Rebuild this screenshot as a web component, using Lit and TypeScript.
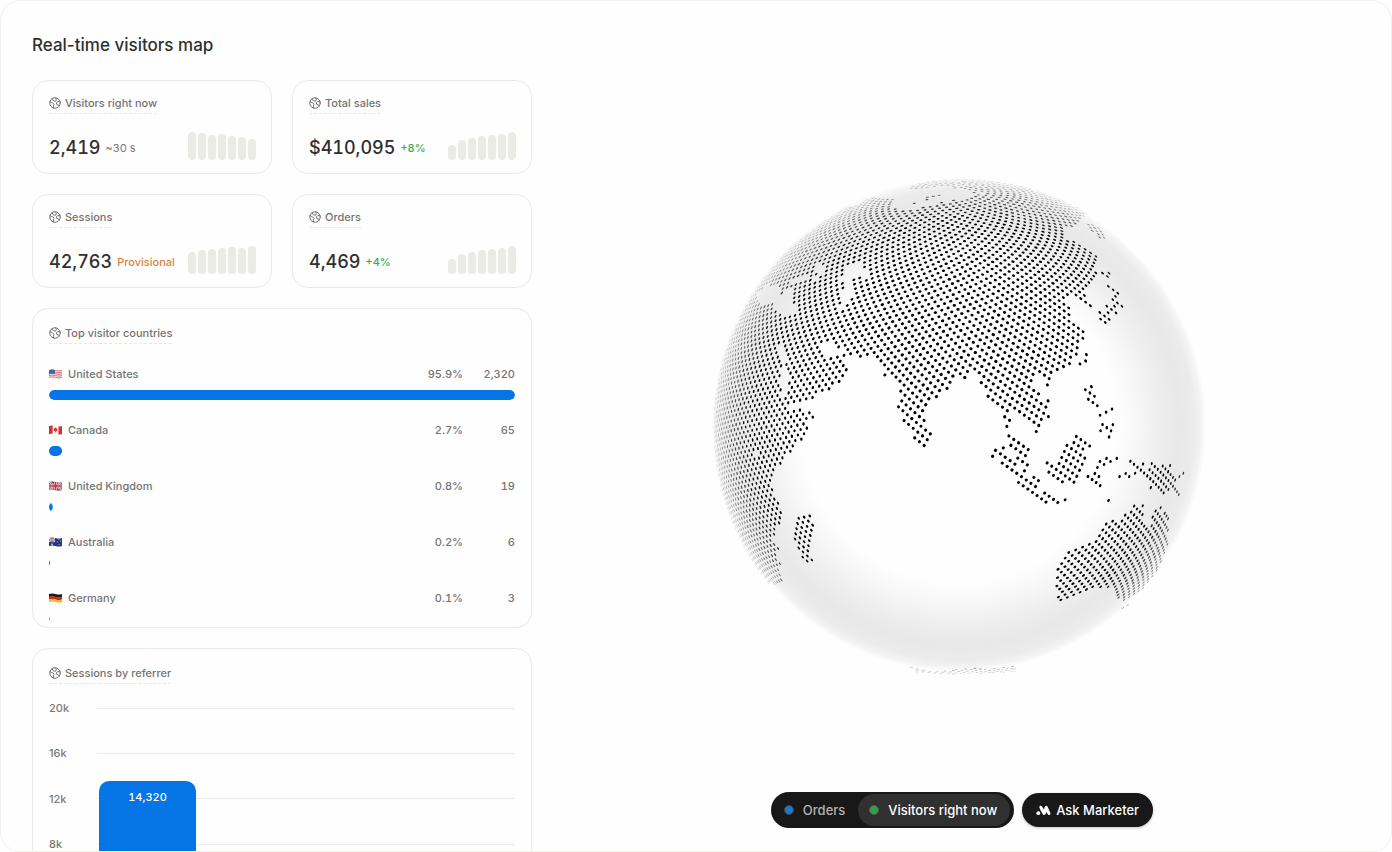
import { LitElement, html, svg, css } from "lit";
import { customElement, property, state } from "lit/decorators.js";

/* ---------- data ---------- */

interface Metric {
  label: string;
  value: string;
  note: string;
  tone: "muted" | "up" | "warn";
  bars: number[];
}

const METRICS: Metric[] = [
  { label: "Visitors right now", value: "2,419", note: "~30 s", tone: "muted", bars: [28, 27, 25, 26, 24, 23, 21] },
  { label: "Total sales", value: "$410,095", note: "+8%", tone: "up", bars: [15, 20, 22, 24, 25, 26, 28] },
  { label: "Sessions", value: "42,763", note: "Provisional", tone: "warn", bars: [22, 24, 25, 26, 27, 26, 28] },
  { label: "Orders", value: "4,469", note: "+4%", tone: "up", bars: [15, 20, 22, 24, 25, 26, 28] },
];

const COUNTRIES = [
  { code: "us", name: "United States", share: "95.9%", count: 2320 },
  { code: "ca", name: "Canada", share: "2.7%", count: 65 },
  { code: "gb", name: "United Kingdom", share: "0.8%", count: 19 },
  { code: "au", name: "Australia", share: "0.2%", count: 6 },
  { code: "de", name: "Germany", share: "0.1%", count: 3 },
];

/* ---------- small pictures ---------- */

const globeIcon = html`<svg class="icon" width="12" height="12" viewBox="0 0 24 24" fill="none" stroke="currentColor"
  stroke-width="2" stroke-linecap="round" stroke-linejoin="round" aria-hidden="true">
  <circle cx="12" cy="12" r="10.5" />
  <path d="M2 9.5 7 11.5 10 14.5 8.5 18 9 22" />
  <path d="M6 3.8 8.5 7.5 13 8.5 14.5 5.5 13.5 2" />
  <path d="M22 9.5 17.5 9 14.5 12 16 15.5 19.5 16 20.5 18" />
</svg>`;

const flagArt: Record<string, unknown> = {
  us: svg`<path fill="#f3e6e6" d="M0 1Q3 0 6.500 1T13 1V9Q10 10 6.500 9T0 9Z"/>
    <path stroke="#d0606a" stroke-width=".8" fill="none" d="M0 1.500Q3 .5 6.500 1.500T13 1.500M0 3.200Q3 2.200 6.500 3.200T13 3.200M0 4.900Q3 3.900 6.500 4.900T13 4.900M0 6.600Q3 5.600 6.500 6.600T13 6.600M0 8.400Q3 7.400 6.500 8.400T13 8.400"/>
    <path fill="#4a5f9e" d="M0 1Q3 0 6 .9V5Q3 4.100 0 5.100Z"/>`,
  ca: svg`<path fill="#f7eeee" d="M0 1Q3 0 6.500 1T13 1V9Q10 10 6.500 9T0 9Z"/>
    <path fill="#d2322d" d="M0 1Q2 .3 3.600 .4V8.500Q1.500 8.500 0 9.200ZM9.500 1.500Q11.500 1.600 13 1V9Q11 9.700 9.500 9.500ZM6.500 2.300 7.300 3.600 8.500 3.500 8 5.200 8.400 5.900 6.800 6.300V7.500H6.200V6.300L4.600 5.700 5 4.900 4.500 3.400 5.700 3.500Z"/>`,
  gb: svg`<path fill="#2b3a78" d="M0 1Q3 0 6.500 1T13 1V9Q10 10 6.500 9T0 9Z"/>
    <path stroke="#f0e8ec" stroke-width="1.800" d="M.3 1 12.700 9M12.700 1 .3 9"/>
    <path stroke="#f0e8ec" stroke-width="3" d="M6.500 1V9.200M0 5H13"/>
    <path stroke="#cf2f3c" stroke-width=".7" d="M.3 1 12.700 9M12.700 1 .3 9"/>
    <path stroke="#cf2f3c" stroke-width="1.700" d="M6.500 .9V9.200M0 5H13"/>`,
  au: svg`<path fill="#1f3a80" d="M0 1Q3 0 6.500 1T13 1V9Q10 10 6.500 9T0 9Z"/>
    <path stroke="#e8e4ec" stroke-width="1.100" d="M0 1.200 6 4.800M6 1.200 0 4.800M3 .8V5.200M0 3H6"/>
    <path stroke="#cf2f3c" stroke-width=".6" d="M3 .8V5.200M0 3H6"/>
    <path fill="#fff" d="M3 6.200 3.900 7.200 3 8.300 2.100 7.200ZM9.500 1.800H10.300V2.700H9.500ZM11.300 3.600H12V4.400H11.300ZM8.200 4.400H9V5.200H8.200ZM9.700 7.200H10.600V8.100H9.700Z"/>`,
  de: svg`<path fill="#1c1a1a" d="M0 1Q3 0 6.500 1T13 1V4Q10 5 6.500 4T0 4Z"/>
    <path fill="#d3281f" d="M0 3.800Q3 2.800 6.500 3.800T13 3.800V6.600Q10 7.600 6.500 6.600T0 6.600Z"/>
    <path fill="#f2b927" d="M0 6.500Q3 5.500 6.500 6.500T13 6.500V9Q10 10 6.500 9T0 9Z"/>`,
};

const flag = (code: string) =>
  html`<svg class="flag" width="13" height="10" viewBox="0 0 13 10" aria-hidden="true">${flagArt[code]}</svg>`;

const marketerIcon = html`<svg width="15" height="12" viewBox="0 0 15 12" fill="#fff" aria-hidden="true">
  <circle cx="2.300" cy="9.200" r="1.900" />
  <path d="M3.300 3.200C3.100 1.900 4.900 1.100 5.800 2.300L8 5.600 8.800 2.800C9.200 1.500 10.900 1.400 11.500 2.600L14.400 8.900C15 10.400 13 11.800 11.900 10.400L10.300 8 9.600 9.900C9.100 11.200 7.500 11.300 6.800 10.200L4.600 6.600Z" />
</svg>`;

/* ---------- globe ---------- */

const VIEW = 628;
const CX = 314.5;
const CY = 316;
const RADIUS = 250.8;
const DOTS = 20000;
const LONGITUDE = (90.568 * Math.PI) / 180;
const TILT = 0.1806;

type Point = [number, number];

/** Outlines are kept in four tiles, at three units to one unit of the view. */
const tile = (ox: number, oy: number) => (list: number[]): Point[] => {
  const out: Point[] = [];
  for (let i = 0; i < list.length; i += 2) out.push([ox + list[i] / 3, oy + list[i + 1] / 3]);
  return out;
};
const nw = tile(52, 58);
const ne = tile(302, 58);
const sw = tile(52, 308);
const se = tile(302, 308);

const LAND: Point[][] = [
  // Eurasia and Africa
  [
    ...nw([-60, 400, 0, 300, 150, 150, 300, 60, 400, 125, 440, 112, 470, 106, 500, 88, 530, 82, 580, 84, 580, 114, 600, 118, 630, 120, 650, 114, 700, 106, 715, 97, 740, 98, 750, 90]),
    ...ne([15, 90, 40, 84, 60, 77, 90, 70, 110, 66, 90, 55, 85, 30, 200, 10, 420, 120, 400, 140, 385, 165, 350, 172, 345, 195, 352, 207, 400, 222, 413, 235, 432, 243, 446, 268, 440, 290, 442, 318, 420, 336, 408, 352, 412, 375, 415, 390, 430, 405, 414, 422, 405, 405, 390, 390, 378, 380, 362, 380, 350, 386, 350, 400, 365, 410, 365, 435, 380, 460, 395, 472, 406, 505, 388, 518, 386, 550, 366, 585, 340, 596, 322, 604, 303, 620, 300, 648, 288, 650, 290, 628, 270, 620, 248, 625, 252, 640, 258, 660, 276, 688, 288, 702, 290, 685, 301, 690, 294, 714, 301, 740, 275, 772, 272, 775, 262, 792, 245, 765, 232, 748, 212, 736, 196, 720, 182, 715, 186, 751, 178, 775, 164, 775, 158, 741, 138, 702, 108, 680, 102, 655, 90, 642, 74, 614, 60, 612, 44, 630, 25, 618, 8, 626]),
    ...nw([750, 642, 742, 662, 712, 686, 684, 706, 674, 724, 678, 752]),
    ...sw([697, 41, 673, 84, 655, 72, 618, 14]),
    ...nw([588, 710, 598, 690, 595, 665, 592, 640, 575, 622, 547, 618, 556, 597, 536, 577, 525, 560, 512, 558, 480, 565, 450, 558, 432, 566, 444, 600, 420, 640, 388, 662, 362, 668, 337, 690, 300, 698, 280, 704, 262, 712, 283, 716, 325, 722, 345, 740, 316, 762]),
    ...sw([327, 25, 309, 60, 290, 80, 275, 98, 252, 105, 247, 130, 224, 150, 217, 180, 212, 195, 222, 210, 228, 237, 241, 250, 249, 277, 246, 310, 230, 325, 229, 343, 218, 360, 228, 370, 242, 385, 232, 405, 241, 435, 240, 460, 248, 485, 240, 494, 150, 494, 40, 300, -20, 100]),
  ],
  // Malay peninsula
  se([164, 10, 186, -5, 186, 8, 176, 28, 164, 26]),
  // Borneo
  se([284, 128, 292, 120, 312, 134, 325, 120, 335, 88, 362, 64, 375, 40, 395, 50, 426, 76, 410, 92, 412, 115, 404, 135, 394, 155, 384, 178, 374, 194, 355, 190, 335, 194, 305, 174, 288, 160, 294, 142]),
  // New Guinea
  se([536, 118, 560, 128, 592, 146, 600, 122, 640, 138, 664, 128, 664, 150, 678, 172, 700, 154, 704, 164, 680, 188, 692, 225, 680, 225, 662, 204, 645, 224, 625, 207, 600, 210, 594, 197, 610, 188, 592, 174, 570, 160, 545, 142]),
  // Australia
  se([313, 472, 324, 430, 338, 410, 350, 390, 397, 374, 417, 366, 437, 350, 450, 324, 485, 296, 513, 296, 522, 278, 545, 264, 545, 250, 556, 256, 564, 258, 580, 250, 584, 287, 577, 303, 600, 314, 604, 300, 608, 270, 630, 256, 640, 276, 654, 285, 656, 330, 653, 372, 642, 412, 620, 455, 590, 495, 560, 525, 520, 544, 497, 536, 494, 514, 470, 498, 450, 506, 425, 508, 390, 520, 350, 538, 330, 546, 316, 534, 322, 505]),
  // Madagascar
  sw([288, 288, 330, 280, 346, 315, 338, 345, 336, 375, 328, 395, 344, 420, 323, 430, 303, 414, 292, 388, 278, 356, 284, 320]),
  // Kamchatka and the Kuril islands
  ne([412, 160, 428, 160, 458, 180, 464, 205, 448, 205, 432, 188, 418, 176]),
  // Arctic archipelago beyond the pole
  nw([620, 58, 650, 44, 690, 20, 790, 10, 790, 52, 740, 46, 690, 50, 660, 58]),
  ne([30, 10, 100, 20, 130, 60, 88, 68, 60, 68, 50, 58, 0, 52, -10, 40, -10, 20]),
  // Antarctica
  sw([630, 740, 700, 752, 780, 748, 780, 764, 640, 758]),
  se([0, 748, 80, 742, 130, 745, 195, 738, 200, 756, 0, 764]),
];

const WATER: Point[][] = [
  // Mediterranean
  nw([172, 366, 200, 347, 222, 345, 236, 352, 238, 378, 256, 372, 262, 352, 273, 350, 272, 402, 290, 410, 290, 424, 282, 431, 250, 438, 232, 428, 218, 402, 210, 398, 195, 410, 176, 396]),
  // Black Sea
  nw([345, 298, 358, 280, 380, 288, 378, 310, 366, 312, 352, 310]),
  nw([276, 332, 292, 322, 318, 310, 335, 320, 355, 330, 350, 336, 320, 326, 292, 332, 280, 345]),
  // Caspian Sea
  nw([430, 312, 445, 288, 470, 284, 484, 280, 484, 298, 500, 302, 506, 318, 490, 328, 475, 318, 452, 324, 452, 350, 468, 360, 445, 385, 443, 398, 440, 412, 425, 418, 420, 395, 420, 365, 430, 355, 430, 340, 418, 330]),
  // Persian Gulf
  nw([366, 522, 385, 512, 402, 518, 406, 532, 412, 540, 432, 545, 426, 556, 412, 556, 392, 560, 378, 556, 368, 545]),
  // Red Sea
  nw([240, 528, 250, 545, 256, 580, 264, 600, 264, 655, 254, 680, 246, 672, 242, 640, 240, 600, 246, 578, 240, 560]),
  // Lake Victoria
  sw([158, 96, 178, 96, 172, 118, 160, 116]),
];

/** Islands that are no more than a dot or a short chain of dots. */
const ISLANDS: Point[] = [
  ...se([128, 108, 136, 91, 152, 101, 160, 84, 166, 111, 157, 129, 180, 122, 171, 138, 194, 131, 187, 148, 200, 160, 203, 115, 218, 125, 232, 135, 223, 152, 177, 48, 192, 58, 183, 76, 206, 68, 221, 79, 235, 89, 197, 86, 212, 97, 226, 107, 214, 170, 205, 187, 228, 179, 220, 197, 243, 190, 252, 172, 265, 182, 257, 199, 233, 207, 247, 217, 261, 227, 275, 236, 288, 246, 283, 219, 297, 229, 310, 238, 323, 247, 345, 239]),
  ...se([413, 170, 426, 178, 439, 188, 450, 197, 434, 160, 445, 170, 442, 142, 450, 125, 462, 133, 470, 115, 481, 124, 500, 115, 508, 170, 527, 160, 537, 169, 555, 160, 580, 131, 475, 241, 497, 575, 515, 565, 528, 555]),
  ...se([458, 14, 489, 14, 471, 23, 452, 32, 483, 32, 477, 50]),
  ...ne([406, 659, 425, 650, 421, 669, 434, 679, 415, 688, 429, 698, 443, 707, 451, 735, 468, 727, 487, 717, 410, 554, 391, 582, 409, 573]),
  ...ne([477, 350, 493, 360, 507, 370, 500, 380, 492, 390, 505, 400, 519, 409, 501, 429, 497, 409, 473, 409, 487, 419, 477, 429, 466, 438, 452, 428, 455, 448, 480, 448, 468, 458]),
  ...ne([440, 268, 457, 279, 462, 310, 482, 310, 477, 320, 475, 222, 293, 645]),
  ...nw([648, 101, 668, 94, 684, 85, 703, 80, 722, 76, 490, 290]),
];

const inside = ([x, y]: Point, ring: Point[]): boolean => {
  let hit = false;
  for (let i = 0, j = ring.length - 1; i < ring.length; j = i++) {
    const [xi, yi] = ring[i];
    const [xj, yj] = ring[j];
    if (yi > y !== yj > y && x < ((xj - xi) * (y - yi)) / (yj - yi) + xi) hit = !hit;
  }
  return hit;
};

const isLand = (p: Point): boolean =>
  ISLANDS.some(([x, y]) => Math.hypot(x - p[0], y - p[1]) < 2) ||
  (LAND.some((r) => inside(p, r)) && !WATER.some((r) => inside(p, r)));

/** Dots of a Fibonacci sphere, flattened towards the limb, in paths by opacity. */
function buildDots(): { opacity: number; d: string }[] {
  const buckets: string[][] = Array.from({ length: 10 }, () => []);
  const ct = Math.cos(TILT);
  const st = Math.sin(TILT);
  for (let i = 0; i < DOTS; i++) {
    const y = 1 - (2 * i) / DOTS;
    const s = Math.sqrt(1 - y * y);
    const a = -2 * Math.PI * ((i * 1.618033988749895) % 1);
    const px = Math.cos(a) * s;
    const pz = Math.sin(a) * s;
    const x = Math.cos(LONGITUDE) * pz - Math.sin(LONGITUDE) * px;
    const z = Math.cos(LONGITUDE) * px + Math.sin(LONGITUDE) * pz;
    const sy = y * ct - z * st;
    const depth = y * st + z * ct;
    if (depth < 0.05) continue;
    const p: Point = [CX + x * RADIUS, CY - sy * RADIUS];
    if (!isLand(p)) continue;
    const r = 1.55;
    const k = Math.max(depth, 0.25) * r;
    const turn = (Math.atan2(-sy, x) * 180) / Math.PI;
    const rad = (turn * Math.PI) / 180;
    const dx = Math.cos(rad) * k;
    const dy = Math.sin(rad) * k;
    const opacity = Math.min(1, Math.max(0, (depth - 0.1) * 2.2));
    const b = Math.round(opacity * 9);
    if (!b) continue;
    const arc = `A${k.toFixed(2)} ${r} ${turn.toFixed(1)} 1 0`;
    const from = `${(p[0] - dx).toFixed(2)} ${(p[1] - dy).toFixed(2)}`;
    const to = `${(p[0] + dx).toFixed(2)} ${(p[1] + dy).toFixed(2)}`;
    buckets[b].push(`M${from}${arc} ${to}${arc} ${from}Z`);
  }
  return buckets.map((list, b) => ({ opacity: b / 9, d: list.join("") })).filter((g) => g.d);
}

@customElement("visitor-globe")
class VisitorGlobe extends LitElement {
  private dots = buildDots();

  static styles = css`
    :host { display: block; }
    svg { display: block; }
  `;

  render() {
    return html`<svg width=${VIEW} height=${VIEW} viewBox="0 0 ${VIEW} ${VIEW}" role="img" aria-label="Globe with visitors">
      <defs>
        <radialGradient id="shade" gradientUnits="userSpaceOnUse" cx="311" cy="313" r="247">
          <stop offset="0.640" stop-color="#fefefe" />
          <stop offset="0.720" stop-color="#f7f7f7" />
          <stop offset="0.810" stop-color="#eeeeee" />
          <stop offset="0.890" stop-color="#e8e8e8" />
          <stop offset="0.950" stop-color="#ebebeb" />
          <stop offset="0.980" stop-color="#f3f3f3" />
          <stop offset="1" stop-color="#fefefe" />
        </radialGradient>
      </defs>
      <circle cx="311" cy="313" r="247" fill="url(#shade)" />
      ${this.dots.map((g) => svg`<path d=${g.d} fill="#000" opacity=${g.opacity.toFixed(2)} />`)}
    </svg>`;
  }
}

/* ---------- cards ---------- */

const shared = css`
  :host { display: block; }
  * { box-sizing: border-box; }
  .card {
    border: 1px solid #e9e9e8;
    border-radius: 16px;
    background: #fefefe;
    padding: 15px 16px;
  }
  .label {
    display: flex;
    width: fit-content;
    align-items: center;
    gap: 4px;
    height: 18px;
    margin: 0;
    padding-bottom: 4px;
    border-bottom: 1px dashed #e6e6e4;
    font-size: 11px;
    font-weight: 450;
    line-height: 14px;
    color: #747472;
  }
  .icon { display: block; }
`;

@customElement("metric-card")
class MetricCard extends LitElement {
  @property({ attribute: false }) metric!: Metric;

  static styles = [
    shared,
    css`
      .card { display: flex; flex-direction: column; gap: 18px; padding: 15px 15px 13px 16px; }
      .row { display: flex; align-items: flex-end; justify-content: space-between; }
      .figures { display: flex; align-items: center; gap: 5px; line-height: 24px; font-variant-numeric: tabular-nums; }
      .value { font-size: 18px; font-weight: 500; color: #30302e; }
      .note { font-size: 11px; font-weight: 450; }
      .muted { color: #777775; font-weight: 400; }
      .up { color: #3fae4e; }
      .warn { color: #d9823f; }
      .spark { display: flex; align-items: flex-end; gap: 2px; height: 28px; }
      .bar { width: 8px; border-radius: 4px; background: #ebebe6; }
    `,
  ];

  render() {
    const m = this.metric;
    return html`<section class="card">
      <h2 class="label">${globeIcon}<span>${m.label}</span></h2>
      <div class="row">
        <div class="figures"><span class="value">${m.value}</span><span class="note ${m.tone}">${m.note}</span></div>
        <div class="spark" aria-hidden="true">
          ${m.bars.map((h) => html`<span class="bar" style="height:${h}px"></span>`)}
        </div>
      </div>
    </section>`;
  }
}

@customElement("country-card")
class CountryCard extends LitElement {
  static styles = [
    shared,
    css`
      .card { max-height: 320px; overflow: hidden; padding: 17px 16px 3px; }
      .list { list-style: none; margin: 22px 0 0; padding: 0; display: flex; flex-direction: column; gap: 22px; }
      .item { display: flex; flex-direction: column; gap: 8px; }
      .line {
        display: grid;
        grid-template-columns: 13px 1fr auto 46px;
        align-items: center;
        column-gap: 6px;
        font-size: 11px;
        font-weight: 450;
        line-height: 16px;
        color: #757573;
      }
      .num { text-align: right; font-variant-numeric: tabular-nums; }
      .track { height: 10px; border-radius: 5px; overflow: hidden; }
      .fill { height: 100%; border-radius: 5px; background: #0575e6; }
      .flag { display: block; }
    `,
  ];

  render() {
    const max = COUNTRIES[0].count;
    return html`<section class="card">
      <h2 class="label">${globeIcon}<span>Top visitor countries</span></h2>
      <ul class="list">
        ${COUNTRIES.map(
          (c) => html`<li class="item">
            <div class="line">
              ${flag(c.code)}<span>${c.name}</span><span class="num">${c.share}</span>
              <span class="num">${c.count.toLocaleString("en-US")}</span>
            </div>
            <div class="track"><div class="fill" style="transform:translateX(${(c.count / max) * 100 - 100}%)"></div></div>
          </li>`
        )}
      </ul>
    </section>`;
  }
}

@customElement("referrer-card")
class ReferrerCard extends LitElement {
  static styles = [
    shared,
    css`
      .card { padding: 17px 16px 16px; }
      .chart { display: grid; margin-top: 16px; font-size: 11px; font-weight: 450; color: #7a7a78; }
      .grid { grid-area: 1 / 1; display: flex; flex-direction: column; justify-content: space-between; height: 243px; }
      .tick { display: grid; grid-template-columns: 48px 1fr; align-items: center; line-height: 16px; }
      .rule { height: 1px; background: #ebebea; }
      .bars { grid-area: 1 / 1; display: flex; align-items: flex-end; margin: 8px 0 8px 48px; padding-left: 2px; }
      .column {
        width: 97px;
        height: 68%;
        padding-top: 8px;
        border-radius: 10px 10px 0 0;
        background: #0575e6;
        color: #fff;
        text-align: center;
        line-height: 16px;
        font-variant-numeric: tabular-nums;
      }
    `,
  ];

  render() {
    return html`<section class="card">
      <h2 class="label">${globeIcon}<span>Sessions by referrer</span></h2>
      <div class="chart">
        <div class="grid">
          ${["20k", "16k", "12k", "8k", "4k", "0"].map(
            (t) => html`<div class="tick"><span>${t}</span><span class="rule"></span></div>`
          )}
        </div>
        <div class="bars"><div class="column">14,320</div></div>
      </div>
    </section>`;
  }
}

/* ---------- page ---------- */

@customElement("app-root")
class AppRoot extends LitElement {
  @state() private layer = "visitors";

  static styles = css`
    :host {
      display: block;
      height: 100vh;
      font-family: Inter, sans-serif;
      color: #30302e;
      background: #fefefe;
    }
    * { box-sizing: border-box; }
    .page {
      display: grid;
      grid-template-columns: 532px 1fr;
      grid-template-rows: minmax(0, 1fr);
      height: 100%;
      overflow: hidden;
      border: 1px solid #f1f1f0;
      border-radius: 20px;
    }
    .side { padding: 31px 0 32px 31px; overflow-y: auto; scrollbar-width: none; }
    .title { margin: 0 0 22px; font-size: 17px; font-weight: 450; line-height: 26px; }
    .stack { display: flex; flex-direction: column; gap: 20px; width: 500px; }
    .metrics { display: grid; grid-template-columns: 1fr 1fr; gap: 20px; }
    .stage { position: relative; display: grid; place-items: center; overflow: hidden; }
    .toolbar {
      position: absolute;
      inset: auto 0 23px;
      display: flex;
      justify-content: center;
      align-items: center;
      gap: 8px;
    }
    .switch { display: flex; height: 36px; padding: 2px 4px 2px 2px; border-radius: 18px; background: #181818; }
    .button {
      display: flex;
      align-items: center;
      border: 0;
      border-radius: 17px;
      background: #181818;
      color: #b4b4b4;
      font: 450 13px / 16px Inter, sans-serif;
    }
    .layer { gap: 9px; padding: 0 13px 0 11px; }
    .layer[aria-pressed="true"] { background: #303030; color: #fff; }
    .dot { width: 10px; height: 10px; border-radius: 5px; }
    .blue { background: #1f77d0; border: 1px solid #44404a; }
    .green { background: #2fa14a; border: 1px solid #6a5648; }
    .ask { gap: 5px; height: 34px; padding: 0 14px; color: #fff; box-shadow: 0 1px 3px rgba(0, 0, 0, 0.25); }
  `;

  private layerButton(id: string, dot: string, text: string) {
    return html`<button class="button layer" aria-pressed=${this.layer === id} @click=${() => (this.layer = id)}>
      <span class="dot ${dot}"></span>${text}
    </button>`;
  }

  render() {
    return html`<main class="page">
      <div class="side">
        <h1 class="title">Real-time visitors map</h1>
        <div class="stack">
          <div class="metrics">${METRICS.map((m) => html`<metric-card .metric=${m}></metric-card>`)}</div>
          <country-card></country-card>
          <referrer-card></referrer-card>
        </div>
      </div>
      <div class="stage">
        <visitor-globe></visitor-globe>
        <div class="toolbar">
          <div class="switch">
            ${this.layerButton("orders", "blue", "Orders")}${this.layerButton("visitors", "green", "Visitors right now")}
          </div>
          <button class="button ask">${marketerIcon}Ask Marketer</button>
        </div>
      </div>
    </main>`;
  }
}
